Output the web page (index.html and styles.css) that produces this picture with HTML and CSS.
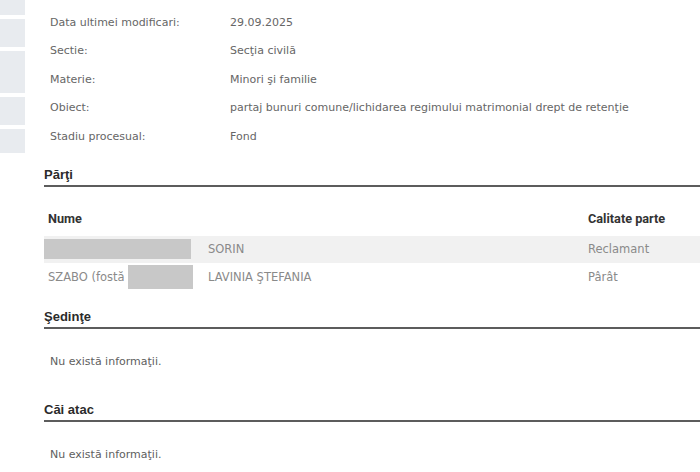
FILE: index.html
```html
<!DOCTYPE html>
<html lang="ro">
<head>
    <meta charset="UTF-8">
    <meta name="viewport" content="width=device-width, initial-scale=1.0">
    <title>Detalii dosar</title>
    <link rel="stylesheet" href="styles.css">
</head>
<body>
<div class="page">
    <!-- Meniul lateral (taiat in captura) -->
    <aside class="side">
        <div class="side-item side-a"></div>
        <div class="side-item side-b"></div>
        <div class="side-item side-c"></div>
        <div class="side-item side-b"></div>
        <div class="side-item side-d"></div>
    </aside>

    <main class="main">
        <!-- Detalii dosar -->
        <div class="details">
            <div class="row"><span class="label">Data ultimei modificari:</span><span class="value">29.09.2025</span></div>
            <div class="row"><span class="label">Sectie:</span><span class="value">Secţia civilă</span></div>
            <div class="row"><span class="label">Materie:</span><span class="value">Minori şi familie</span></div>
            <div class="row"><span class="label">Obiect:</span><span class="value">partaj bunuri comune/lichidarea regimului matrimonial drept de retenţie</span></div>
            <div class="row"><span class="label">Stadiu procesual:</span><span class="value">Fond</span></div>
        </div>

        <section class="block block-first">
            <h2 class="block-title">Părţi</h2>
            <table class="parties">
                <thead>
                    <tr><th class="col-name">Nume</th><th>Calitate parte</th></tr>
                </thead>
                <tbody>
                    <tr class="odd">
                        <td class="col-name">
                            <div class="name-cell">
                                <span class="surname"><span class="redact redact-full"></span></span>
                                <span>SORIN</span>
                            </div>
                        </td>
                        <td>Reclamant</td>
                    </tr>
                    <tr>
                        <td class="col-name">
                            <div class="name-cell">
                                <span class="surname">SZABO (fostă<span class="redact redact-short"></span></span>
                                <span>LAVINIA ŞTEFANIA</span>
                            </div>
                        </td>
                        <td>Pârât</td>
                    </tr>
                </tbody>
            </table>
        </section>

        <section class="block">
            <h2 class="block-title">Şedinţe</h2>
            <p class="empty">Nu există informaţii.</p>
        </section>

        <section class="block">
            <h2 class="block-title">Căi atac</h2>
            <p class="empty">Nu există informaţii.</p>
        </section>
    </main>
</div>
</body>
</html>
```

FILE: styles.css
```css
body {
    margin: 0;
    padding: 0;
    background-color: #FFFFFF;
    font-family: "DejaVu Sans", Verdana, sans-serif;
    overflow: hidden;
}

.page {
    display: flex;
    align-items: flex-start;
}

/* Meniul lateral */
.side {
    width: 25px;
    flex-shrink: 0;
    display: flex;
    flex-direction: column;
    gap: 4px;
}

.side-item {
    background-color: #e8ebef;
}

.side-a { height: 15px; }
.side-b { height: 28px; }
.side-c { height: 42px; }
.side-d { height: 24px; }

.main {
    flex: 1;
    padding-left: 19px;
    min-width: 0;
}

/* Detalii */
.details {
    padding-top: 8px;
}

.row {
    display: grid;
    grid-template-columns: 180px 1fr;
    height: 28.5px;
    align-items: center;
    padding-left: 6px;
    font-size: 11px;
    color: #666666;
    white-space: nowrap;
}

/* Sectiuni */
.block {
    margin-top: 18px;
}

.block-first {
    margin-top: 16px;
}

.block-title {
    margin: 0;
    font-family: "Liberation Sans", Arial, sans-serif;
    font-size: 13px;
    font-weight: bold;
    line-height: 16px;
    color: #2b2b2b;
    padding-bottom: 2px;
    border-bottom: 2px solid #5c5c5c;
}

.empty {
    margin: 0;
    padding: 25px 6px 14px;
    font-size: 11px;
    line-height: 16px;
    color: #606060;
}

/* Tabel parti */
.parties {
    width: 100%;
    margin-top: 14px;
    border-collapse: collapse;
    font-size: 11.5px;
}

.parties th {
    height: 35px;
    text-align: left;
    padding: 0 4px;
    font-family: Roboto, sans-serif;
    font-size: 12.7px;
    font-weight: bold;
    color: #333333;
}

.parties td {
    height: 27.5px;
    padding: 0 4px;
    color: #8a8a8a;
    white-space: nowrap;
}

.parties .col-name {
    width: 532px;
}

.parties tr.odd td {
    background-color: #f1f1f1;
}

.name-cell {
    display: grid;
    grid-template-columns: 160px auto;
    align-items: center;
}

.surname {
    display: flex;
    align-items: center;
}

.redact {
    display: inline-block;
    background-color: #c8c8c8;
}

.redact-full {
    width: 147px;
    height: 20px;
    margin-left: -4px;
}

.redact-short {
    width: 65px;
    height: 24px;
    margin-left: 3px;
}
```
